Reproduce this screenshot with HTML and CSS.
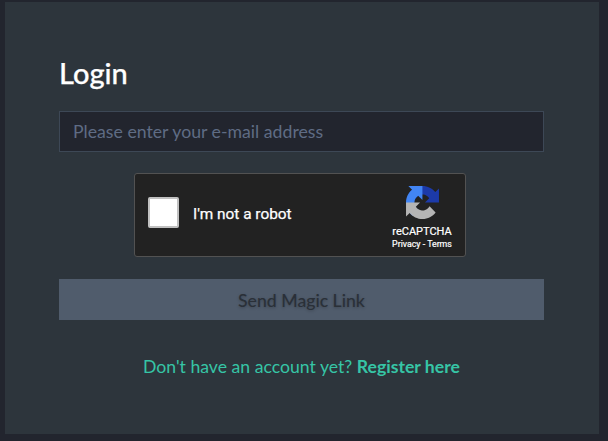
FILE: index.html
```html
<!DOCTYPE html>
<html lang="en">
<head>
<meta charset="utf-8">
<title>Login</title>
<link rel="stylesheet" href="styles.css">
</head>
<body>
<main class="panel">
  <h1 class="title">Login</h1>
  <form class="form">
    <input class="email" type="email" placeholder="Please enter your e-mail address">
    <div class="captcha">
      <span class="checkbox"></span>
      <span class="captcha-label">I'm not a robot</span>
      <div class="brand">
        <svg class="logo" viewBox="0 0 64 64">
          <path fill="#1c3aa9" d="M64 31.955l-.033-1.37V4.687l-7.16 7.16C50.948 4.674 42.033.093 32.05.093c-10.4 0-19.622 4.96-25.458 12.64l11.736 11.86a15.55 15.55 0 0 1 4.754-5.334c2.05-1.6 4.952-2.906 8.968-2.906.485 0 .86.057 1.135.163 4.976.393 9.288 3.14 11.828 7.124l-8.307 8.307L64 31.953"/>
          <path fill="#4285f4" d="M31.862.094l-1.37.033H4.594l7.16 7.16C4.58 13.147 0 22.06 0 32.046c0 10.4 4.96 19.622 12.64 25.458L24.5 45.768a15.55 15.55 0 0 1-5.334-4.754c-1.6-2.05-2.906-4.952-2.906-8.968 0-.485.057-.86.163-1.135.393-4.976 3.14-9.288 7.124-11.828l8.307 8.307L31.86.095"/>
          <path fill="#b5b5b5" d="M.001 32.045l.033 1.37v25.898l7.16-7.16c5.86 7.173 14.774 11.754 24.76 11.754 10.4 0 19.622-4.96 25.458-12.64l-11.736-11.86a15.55 15.55 0 0 1-4.754 5.334c-2.05 1.6-4.952 2.906-8.968 2.906-.485 0-.86-.057-1.135-.163-4.976-.393-9.288-3.14-11.828-7.124l8.307-8.307c-10.522.04-22.4.066-27.295-.005"/>
        </svg>
        <span class="brand-name">reCAPTCHA</span>
        <span class="brand-links">Privacy - Terms</span>
      </div>
    </div>
    <button class="submit" type="button">Send Magic Link</button>
  </form>
  <p class="register">Don't have an account yet? <b>Register here</b></p>
</main>
</body>
</html>
```
FILE: styles.css
```css
* { box-sizing: border-box; }
body {
  margin: 0;
  height: 441px;
  padding: 2px 9px 7px 5px;
  overflow: hidden;
  background: #22252e;
  font-family: Lato, sans-serif;
}
.panel {
  height: 432px;
  padding: 53px 55px 0 54px;
  background: #2d353c;
}
.title {
  margin: 0 0 20px;
  font-size: 29px;
  line-height: 36px;
  font-weight: 500;
  color: #fff;
  -webkit-text-stroke: .25px currentColor;
}
.form {
  display: flex;
  flex-direction: column;
  align-items: center;
}
.email {
  width: 100%;
  height: 41px;
  padding: 0 13px 1px;
  border: 1px solid #3d4856;
  border-radius: 0;
  background: #22252e;
  color: #fff;
  font: 17.7px Lato, sans-serif;
}
.email::placeholder { color: #5f6c84; opacity: 1; }
.captcha {
  display: flex;
  align-items: center;
  width: 332px;
  height: 84px;
  margin: 21px 3px 22px 0;
  padding: 0 13px;
  border: 1px solid #525252;
  border-radius: 3px;
  background: #222;
  color: #fff;
  font-family: Roboto, sans-serif;
}
.checkbox {
  width: 31px;
  height: 31px;
  margin-top: -6px;
  border: 2px solid #c1c1c1;
  border-radius: 2px;
  background: #fff;
}
.captcha-label {
  margin: -3px auto 0 14px;
  font-size: 15.4px;
  -webkit-text-stroke: .25px currentColor;
}
.brand {
  display: flex;
  flex-direction: column;
  align-items: center;
  width: 60px;
  margin-top: 5px;
  white-space: nowrap;
  -webkit-text-stroke: .2px currentColor;
}
.logo { width: 33px; height: 33px; margin-bottom: 6px; }
.brand-name { font-size: 11px; line-height: 14px; }
.brand-links { font-size: 8.8px; line-height: 11px; }
.submit {
  width: 100%;
  height: 41px;
  padding: 2px 0 0;
  border: 0;
  background: #505c6c;
  color: #2a3038;
  font: 500 17.65px Lato, sans-serif;
  text-shadow: 0 1px 3px rgba(0, 0, 0, .25);
}
.register {
  margin: 35px 0 0;
  font-size: 17.65px;
  line-height: 24px;
  text-align: center;
  color: #36c5a6;
}
```
